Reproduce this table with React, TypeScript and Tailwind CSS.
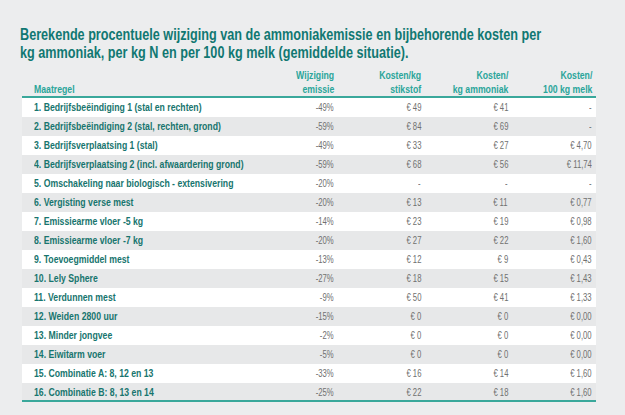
import React from 'react';

interface Row {
  label: string;
  emissie: string;
  stikstof: string;
  ammoniak: string;
  melk: string;
}

const ROWS: Row[] = [
  { label: '1. Bedrijfsbeëindiging 1 (stal en rechten)', emissie: '-49%', stikstof: '€ 49', ammoniak: '€ 41', melk: '-' },
  { label: '2. Bedrijfsbeëindiging 2 (stal, rechten, grond)', emissie: '-59%', stikstof: '€ 84', ammoniak: '€ 69', melk: '-' },
  { label: '3. Bedrijfsverplaatsing 1 (stal)', emissie: '-49%', stikstof: '€ 33', ammoniak: '€ 27', melk: '€ 4,70' },
  { label: '4. Bedrijfsverplaatsing 2 (incl. afwaardering grond)', emissie: '-59%', stikstof: '€ 68', ammoniak: '€ 56', melk: '€ 11,74' },
  { label: '5. Omschakeling naar biologisch - extensivering', emissie: '-20%', stikstof: '-', ammoniak: '-', melk: '-' },
  { label: '6. Vergisting verse mest', emissie: '-20%', stikstof: '€ 13', ammoniak: '€ 11', melk: '€ 0,77' },
  { label: '7. Emissiearme vloer -5 kg', emissie: '-14%', stikstof: '€ 23', ammoniak: '€ 19', melk: '€ 0,98' },
  { label: '8. Emissiearme vloer -7 kg', emissie: '-20%', stikstof: '€ 27', ammoniak: '€ 22', melk: '€ 1,60' },
  { label: '9. Toevoegmiddel mest', emissie: '-13%', stikstof: '€ 12', ammoniak: '€ 9', melk: '€ 0,43' },
  { label: '10. Lely Sphere', emissie: '-27%', stikstof: '€ 18', ammoniak: '€ 15', melk: '€ 1,43' },
  { label: '11. Verdunnen mest', emissie: '-9%', stikstof: '€ 50', ammoniak: '€ 41', melk: '€ 1,33' },
  { label: '12. Weiden 2800 uur', emissie: '-15%', stikstof: '€ 0', ammoniak: '€ 0', melk: '€ 0,00' },
  { label: '13. Minder jongvee', emissie: '-2%', stikstof: '€ 0', ammoniak: '€ 0', melk: '€ 0,00' },
  { label: '14. Eiwitarm voer', emissie: '-5%', stikstof: '€ 0', ammoniak: '€ 0', melk: '€ 0,00' },
  { label: '15. Combinatie A: 8, 12 en 13', emissie: '-33%', stikstof: '€ 16', ammoniak: '€ 14', melk: '€ 1,60' },
  { label: '16. Combinatie B: 8, 13 en 14', emissie: '-25%', stikstof: '€ 22', ammoniak: '€ 18', melk: '€ 1,60' },
];

const COLS = 'grid grid-cols-[minmax(0,1fr)_80px_87px_87px_88px]';

// condensed look: Liberation Sans squeezed horizontally
const Narrow: React.FC<{ children: React.ReactNode; right?: boolean; wide?: boolean }> = ({
  children,
  right,
  wide,
}) => (
  <span
    className={`inline-block whitespace-nowrap ${wide ? 'scale-x-[0.79]' : 'scale-x-[0.7]'} ${
      right ? 'origin-right' : 'origin-left'
    }`}
  >
    {children}
  </span>
);

const App: React.FC = () => {
  return (
    <div
      className="w-[625px] h-[415px] bg-[#ecedee] pt-[26px] pl-[22px] overflow-hidden"
      style={{ fontFamily: '"Liberation Sans", Arial, sans-serif' }}
    >
      {/* Title */}
      <h1 className="-ml-[2px] text-[16px] leading-[18px] font-bold text-[#117872]">
        <div><Narrow wide>Berekende procentuele wijziging van de ammoniakemissie en bijbehorende kosten per</Narrow></div>
        <div><Narrow wide>kg ammoniak, per kg N en per 100 kg melk (gemiddelde situatie).</Narrow></div>
      </h1>

      <div className="w-[574px] mt-[6px]">
        {/* Header */}
        <div className={`${COLS} items-end border-b-2 border-[#3aa89b] text-[11px] leading-[14px] font-bold text-[#2aa59a]`}>
          <div className="pl-3"><Narrow wide>Maatregel</Narrow></div>
          <div className="text-right"><Narrow right wide>Wijziging</Narrow><br /><Narrow right wide>emissie</Narrow></div>
          <div className="text-right"><Narrow right wide>Kosten/kg</Narrow><br /><Narrow right wide>stikstof</Narrow></div>
          <div className="text-right"><Narrow right wide>Kosten/</Narrow><br /><Narrow right wide>kg ammoniak</Narrow></div>
          <div className="text-right pr-1"><Narrow right wide>Kosten/</Narrow><br /><Narrow right wide>100 kg melk</Narrow></div>
        </div>

        {/* Rows */}
        {ROWS.map((row, i) => (
          <div
            key={row.label}
            className={`${COLS} items-center h-[19px] text-[11px] leading-[19px] ${
              i % 2 === 0 ? 'bg-white' : 'bg-[#e7e8e9]'
            } ${i === ROWS.length - 1 ? 'border-b-2 border-[#3aa89b]' : ''}`}
          >
            <div className="pl-3 font-bold text-[#17756e]"><Narrow wide>{row.label}</Narrow></div>
            <div className="text-right text-[#707070]"><Narrow right>{row.emissie}</Narrow></div>
            <div className="text-right text-[#707070]"><Narrow right>{row.stikstof}</Narrow></div>
            <div className="text-right text-[#707070]"><Narrow right>{row.ammoniak}</Narrow></div>
            <div className="text-right pr-1 text-[#707070]"><Narrow right>{row.melk}</Narrow></div>
          </div>
        ))}
      </div>
    </div>
  );
};

export default App;
